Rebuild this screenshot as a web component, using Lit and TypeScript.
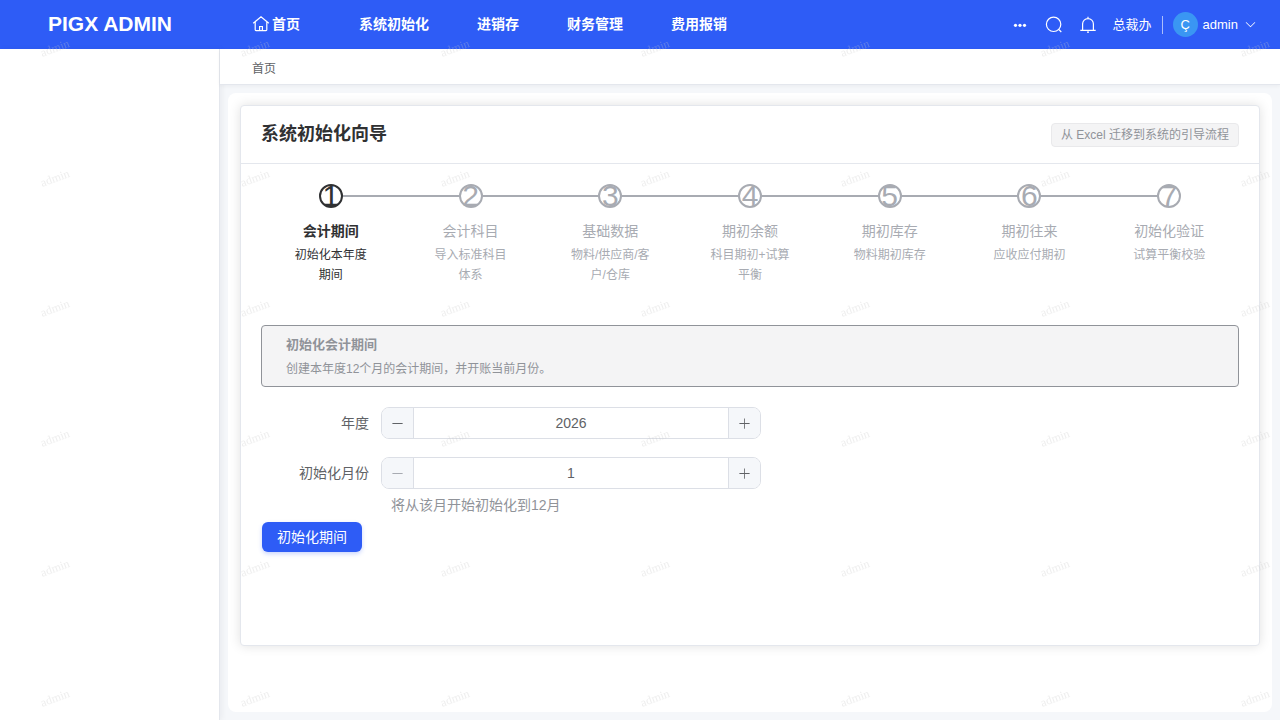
import { LitElement, html, css, svg } from "lit";
import { customElement, property, state } from "lit/decorators.js";

const menus = ["系统初始化", "进销存", "财务管理", "费用报销"];

const steps = [
  { title: "会计期间", desc: "初始化本年度期间" },
  { title: "会计科目", desc: "导入标准科目体系" },
  { title: "基础数据", desc: "物料/供应商/客户/仓库" },
  { title: "期初余额", desc: "科目期初+试算平衡" },
  { title: "期初库存", desc: "物料期初库存" },
  { title: "期初往来", desc: "应收应付期初" },
  { title: "初始化验证", desc: "试算平衡校验" },
];

const icon = (body: unknown) =>
  html`<svg viewBox="0 0 1024 1024" fill="currentColor" aria-hidden="true">${body}</svg>`;

const icons = {
  minus: icon(svg`<path d="M128 544h768a32 32 0 1 0 0-64H128a32 32 0 0 0 0 64z"/>`),
  plus: icon(svg`<path d="M480 480V128a32 32 0 0 1 64 0v352h352a32 32 0 1 1 0 64H544v352a32 32 0 1 1-64 0V544H128a32 32 0 0 1 0-64h352z"/>`),
  down: icon(svg`<path d="M831.872 340.864 512 652.672 192.128 340.864a30.592 30.592 0 0 0-42.752 0 29.12 29.12 0 0 0 0 41.6L489.664 714.24a32 32 0 0 0 44.672 0l340.288-331.712a29.12 29.12 0 0 0 0-41.728 30.592 30.592 0 0 0-42.752 0z"/>`),
};

const lineIcon = (body: unknown) =>
  html`<svg viewBox="0 0 18 18" fill="none" stroke="currentColor" stroke-width="1.2" aria-hidden="true">${body}</svg>`;

@customElement("number-stepper")
class NumberStepper extends LitElement {
  @property() label = "";
  @property({ type: Number }) value = 1;
  @property({ type: Number }) min = 1;
  @property({ type: Number }) max = 12;

  static styles = css`
    :host { display: flex; align-items: center; gap: 12px; }
    * { box-sizing: border-box; }
    label { width: 108px; text-align: right; font-size: 14px; line-height: 32px; color: #606266; }
    .box { display: flex; flex: 0 1 380px; height: 32px; border: 1px solid #dcdfe6; border-radius: 8px; overflow: hidden; background: #fff; }
    button { display: flex; align-items: center; justify-content: center; flex: none; width: 32px; padding: 0; border: 0; background: #f5f7fa; color: #606266; cursor: pointer; }
    button:disabled { color: #a8abb2; cursor: not-allowed; }
    .dec { border-right: 1px solid #dcdfe6; }
    .inc { border-left: 1px solid #dcdfe6; }
    svg { width: 13px; height: 13px; }
    input { flex: 1; min-width: 0; border: 0; outline: 0; padding: 0; text-align: center; background: none; font: inherit; font-size: 14px; color: #606266; }
  `;

  private set(v: number) {
    this.value = Math.min(this.max, Math.max(this.min, v || this.min));
  }

  render() {
    return html`
      <label for="field">${this.label}</label>
      <div class="box">
        <button class="dec" type="button" aria-label="减少" ?disabled=${this.value <= this.min} @click=${() => this.set(this.value - 1)}>${icons.minus}</button>
        <input id="field" inputmode="numeric" .value=${String(this.value)} @change=${(e: Event) => this.set(Number((e.target as HTMLInputElement).value))} />
        <button class="inc" type="button" aria-label="增加" ?disabled=${this.value >= this.max} @click=${() => this.set(this.value + 1)}>${icons.plus}</button>
      </div>
    `;
  }
}

@customElement("water-mark")
class WaterMark extends LitElement {
  @property() text = "";
  @state() private count = 0;

  static styles = css`
    :host { position: fixed; inset: 0; overflow: hidden; pointer-events: none; z-index: 10; display: grid; grid-template-columns: repeat(auto-fill, 200px); grid-auto-rows: 130px; width: calc(100% + 200px); }
    span { padding: 41px 0 0 40px; font: 12px/14px "Liberation Serif", serif; color: rgba(200, 200, 200, 0.3); }
    i { display: inline-block; font-style: normal; transform: rotate(-20deg); }
  `;

  private measure = () => {
    this.count = Math.floor((innerWidth + 200) / 200) * Math.ceil(innerHeight / 130);
  };

  connectedCallback() {
    super.connectedCallback();
    this.measure();
    addEventListener("resize", this.measure);
  }

  disconnectedCallback() {
    removeEventListener("resize", this.measure);
    super.disconnectedCallback();
  }

  render() {
    return Array.from({ length: this.count }, () => html`<span><i>${this.text}</i></span>`);
  }
}

@customElement("app-root")
class AppRoot extends LitElement {
  @state() private active = 0;

  static styles = css`
    :host { display: flex; flex-direction: column; min-height: 100vh; font-family: "Liberation Sans", "Noto Sans CJK SC", sans-serif; font-size: 14px; color: #303133; background: #f5f7fa; }
    * { box-sizing: border-box; }
    a { color: inherit; text-decoration: none; }
    h1, h2, p, ol { margin: 0; padding: 0; list-style: none; }
    button { font: inherit; color: inherit; cursor: pointer; }

    .top { display: flex; align-items: flex-start; height: 49px; background: #2e5cf6; color: #fff; }
    .brand { flex: none; width: 220px; text-align: center; font-size: 21px; line-height: 47px; font-weight: 700; }
    .menu { display: flex; flex: 1; gap: 48px; font-weight: 700; line-height: 48px; white-space: nowrap; }
    .home { display: flex; align-items: center; gap: 2px; padding: 0 11px 0 32px; }
    .home svg { width: 18px; height: 18px; }
    .tools { display: flex; align-items: center; flex: none; height: 49px; font-size: 13px; padding-right: 23px; }
    .tools button { display: flex; align-items: center; padding: 0; border: 0; background: none; }
    .icons { display: flex; gap: 16px; margin-right: 16px; }
    .icons svg { width: 18px; height: 18px; }
    .dept { padding-right: 10px; line-height: 18px; border-right: 1px solid rgba(255, 255, 255, 0.6); margin-right: 10px; }
    .avatar { display: flex; align-items: center; justify-content: center; width: 25px; height: 25px; margin-right: 5px; border-radius: 50%; background: #3a96f3; }
    .arrow { width: 13px; height: 13px; margin-left: 6px; }

    .body { display: flex; flex: 1; }
    .side { flex: none; width: 220px; background: #fff; border-right: 1px solid #e4e7ed; box-shadow: 2px 0 6px rgba(0, 21, 41, 0.05); }
    .content { display: flex; flex-direction: column; flex: 1; min-width: 0; }
    .crumbs { height: 36px; padding: 0 32px; background: #fff; border-bottom: 1px solid #e4e7ed; box-shadow: 0 1px 4px rgba(0, 21, 41, 0.05); font-size: 12px; line-height: 40px; color: #606266; }
    .panel { flex: 1; margin: 8px; padding: 12px; background: #fff; border-radius: 8px; }
    .card { min-height: 541px; border: 1px solid #e4e7ed; border-radius: 4px; background: #fff; box-shadow: 0 0 12px rgba(0, 0, 0, 0.12); }
    .card-head { display: flex; align-items: center; justify-content: space-between; padding: 17px 20px 16px; border-bottom: 1px solid #e4e7ed; }
    h1 { font-size: 18px; line-height: 22px; }
    .card-head h1 { align-self: flex-start; }
    .tag { padding: 0 9px; border: 1px solid #e9e9eb; border-radius: 4px; background: #f4f4f5; color: #909399; font-size: 12px; line-height: 22px; }
    .card-body { padding: 20px; }

    .steps { display: grid; grid-template-columns: repeat(7, 1fr); min-height: 101px; text-align: center; color: #a8abb2; }
    .step { position: relative; }
    .step + .step::before { content: ""; position: absolute; top: 11px; right: 50%; width: 100%; height: 2px; background: #a8abb2; }
    .dot { position: relative; z-index: 1; display: flex; align-items: center; justify-content: center; width: 24px; height: 24px; margin: 0 auto; border: 2px solid; border-radius: 50%; background: #fff; font-size: 30px; line-height: 24px; }
    .name { margin-top: 4px; font-size: 14px; line-height: 38px; }
    .desc { padding: 0 28px; margin-top: -5px; font-size: 12px; line-height: 20px; }
    .current { color: #303133; }
    .current .name { font-weight: 700; }

    .alert { margin: 40px 0 20px; padding: 7px 24px 5px; border: 1px solid #909399; border-radius: 4px; background: #f4f4f5; color: #909399; }
    h2 { font-size: 13px; line-height: 24px; }
    .alert p { font-size: 12px; line-height: 24px; }
    number-stepper { margin-bottom: 18px; }
    .month { margin-bottom: 0; }
    .hint { padding-left: 130px; line-height: 32px; color: #909399; }
    .submit { height: 30px; margin: 1px; padding: 0 15px; border: 0; border-radius: 6px; background: #2e5cf6; color: #fff; line-height: 28px; box-shadow: 0 2px 4px rgba(46, 92, 246, 0.25); }
  `;

  render() {
    return html`
      <header class="top">
        <a class="brand" href="#">PIGX ADMIN</a>
        <nav class="menu">
          <a class="home" href="#">
            ${lineIcon(svg`<path d="M1.200 8.300 9 1.800l7.800 6.500M3.200 7v7.800q0 .8.8.8h10q.8 0 .8-.8V7M7.600 15.500v-4h2.800v4"/>`)}首页
          </a>
          ${menus.map((m) => html`<a href="#">${m}</a>`)}
        </nav>
        <div class="tools">
          <div class="icons">
            <button type="button" aria-label="更多">${lineIcon(svg`<g fill="currentColor" stroke="none"><circle cx="4.500" cy="9.300" r="1.600"/><circle cx="9" cy="9.300" r="1.600"/><circle cx="13.500" cy="9.300" r="1.600"/></g>`)}</button>
            <button type="button" aria-label="搜索">${lineIcon(svg`<circle cx="8.600" cy="8.300" r="7.200"/><path d="m13.700 13.400 2.600 2.600"/>`)}</button>
            <button type="button" aria-label="消息">${lineIcon(svg`<path d="M1.300 14.300h15.400M3.600 14.300V8a5.400 5.400 0 0 1 10.800 0v6.300M9 .8v1.800M8 16.200h2"/>`)}</button>
          </div>
          <span class="dept">总裁办</span>
          <button type="button"><span class="avatar">Ç</span>admin<span class="arrow">${icons.down}</span></button>
        </div>
      </header>
      <div class="body">
        <aside class="side"></aside>
        <div class="content">
          <nav class="crumbs"><a href="#">首页</a></nav>
          <main class="panel">
            <section class="card">
              <header class="card-head">
                <h1>系统初始化向导</h1>
                <span class="tag">从 Excel 迁移到系统的引导流程</span>
              </header>
              <div class="card-body">
                <ol class="steps">
                  ${steps.map((s, i) => html`
                    <li class="step ${i === this.active ? "current" : ""}">
                      <div class="dot">${i + 1}</div>
                      <div class="name">${s.title}</div>
                      <div class="desc">${s.desc}</div>
                    </li>`)}
                </ol>
                <div class="alert">
                  <h2>初始化会计期间</h2>
                  <p>创建本年度12个月的会计期间，并开账当前月份。</p>
                </div>
                <form @submit=${(e: Event) => e.preventDefault()}>
                  <number-stepper label="年度" .value=${2026} .min=${2000} .max=${2100}></number-stepper>
                  <number-stepper class="month" label="初始化月份"></number-stepper>
                  <p class="hint">将从该月开始初始化到12月</p>
                  <button class="submit" type="submit">初始化期间</button>
                </form>
              </div>
            </section>
          </main>
        </div>
      </div>
      <water-mark text="admin"></water-mark>
    `;
  }
}
